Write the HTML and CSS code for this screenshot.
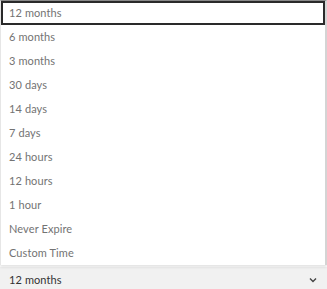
FILE: index.html
```html
<!DOCTYPE html>
<html>
<head>
<meta charset="utf-8">
<link rel="stylesheet" href="styles.css">
</head>
<body>
<div class="page">
  <ul class="menu">
    <li class="opt focused">12 months</li>
    <li class="opt">6 months</li>
    <li class="opt">3 months</li>
    <li class="opt">30 days</li>
    <li class="opt">14 days</li>
    <li class="opt">7 days</li>
    <li class="opt">24 hours</li>
    <li class="opt">12 hours</li>
    <li class="opt">1 hour</li>
    <li class="opt">Never Expire</li>
    <li class="opt">Custom Time</li>
  </ul>
  <div class="select">
    <span class="value">12 months</span>
    <svg class="chev" width="8" height="6" viewBox="0 0 8 6"><path d="M1 1.5 L4 4.5 L7 1.5" fill="none" stroke="#444" stroke-width="1.4"/></svg>
  </div>
</div>
</body>
</html>
```
FILE: styles.css
```css
html, body {
  margin: 0;
  padding: 0;
  background: #ffffff;
}
.page {
  width: 327px;
  height: 289px;
  display: flex;
  flex-direction: column;
  font-family: "Lato", "Open Sans", sans-serif;
  font-size: 11px;
  letter-spacing: 0.1px;
  overflow: hidden;
}
.menu {
  list-style: none;
  margin: 0;
  padding: 0;
  border-top: 1px solid #8a8a8a;
  border-left: 1px solid #e6e6e6;
  border-right: 2px solid #d4d4d4;
  background: #fff;
  box-shadow: 0 2px 3px rgba(0,0,0,0.12);
  position: relative;
  z-index: 1;
}
.opt {
  height: 24px;
  line-height: 24px;
  padding-left: 8px;
  color: #737373;
  box-sizing: border-box;
}
.opt.focused {
  border: 2px solid #2a2a2a;
  line-height: 20px;
  padding-left: 6px;
}
.select {
  flex: 1;
  margin-top: 2px;
  background: #f1f1f1;
  display: flex;
  align-items: center;
  justify-content: space-between;
  padding: 3px 10px 0 9px;
  color: #333;
}
.chev {
  display: block;
}
```
